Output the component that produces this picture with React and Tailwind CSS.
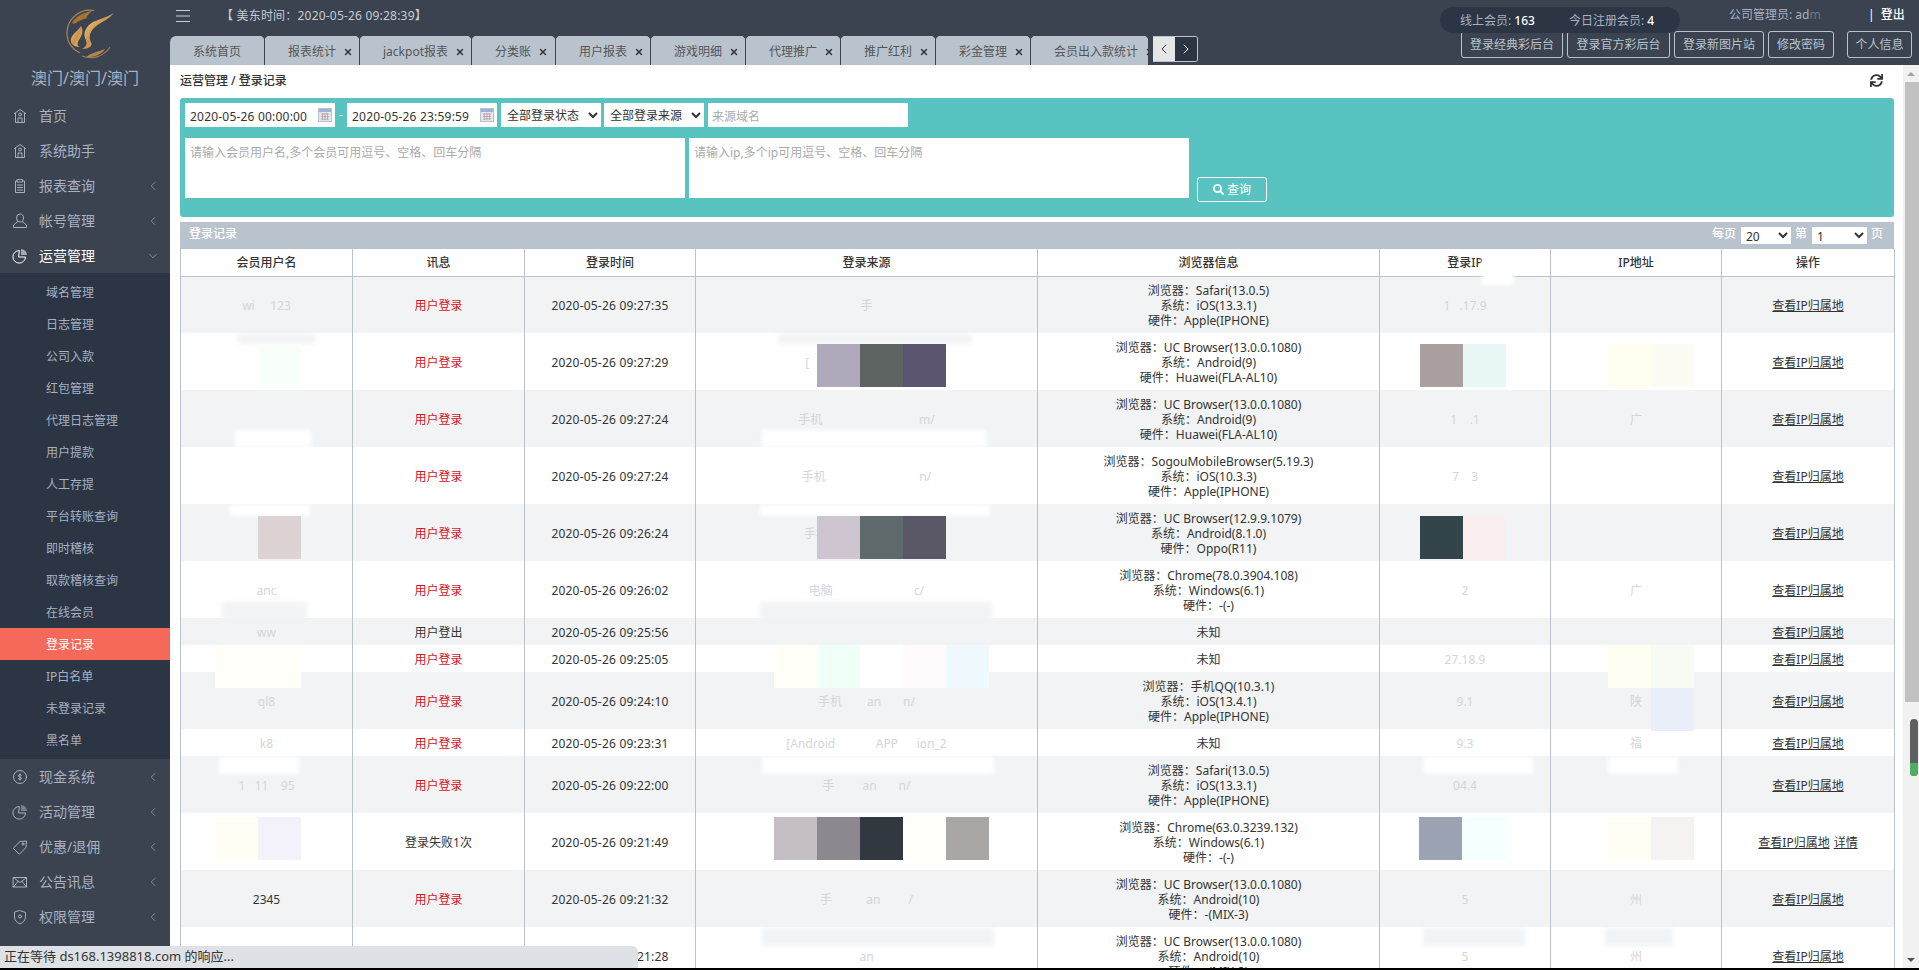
import { FaSearch, FaSync } from 'react-icons/fa'
import { ChevronLeft, ChevronRight, ChevronDown, X } from 'lucide-react'

const line = { fill: 'none', stroke: 'currentColor', strokeWidth: 1, strokeLinejoin: 'round', strokeLinecap: 'round' }

function Icon({ children }) {
  return (
    <svg width="16" height="16" viewBox="0 0 16 16" className="shrink-0" {...line}>
      {children}
    </svg>
  )
}

const HomeIcon = () => (
  <Icon>
    <path d="M2.5 5.5 8 1.5l5.5 4M3.5 5v9.5h9V5" />
    <circle cx="8" cy="6.5" r="1.5" />
    <path d="M6 14.5V10h4v4.5" />
  </Icon>
)
const ReportIcon = () => (
  <Icon>
    <path d="M5.5 3H3.5v11.5h9V3h-2" />
    <path d="M5.5 1.5h5V4h-5zM5.5 7h5M5.5 9.5h5M5.5 12h5" />
  </Icon>
)
const UserIcon = () => (
  <Icon>
    <ellipse cx="8" cy="5" rx="3.5" ry="4" />
    <path d="M5.8 8.5 1.5 12v2.5h13V12l-4.300-3.500" />
  </Icon>
)
const PieIcon = () => (
  <Icon>
    <path d="M7 2.500a6.300 6.300 0 1 0 6.500 6.500H7z" />
    <path d="M9 1a6 6 0 0 1 6 6H9z" fill="currentColor" stroke="none" opacity="0.55" />
  </Icon>
)
const CashIcon = () => (
  <Icon>
    <circle cx="8" cy="8" r="6.500" />
    <path d="M9.500 6.200C9 5.400 6.500 5.300 6.500 6.800S9.500 8 9.500 9.400 7 10.700 6.400 9.800M8 4.800v6.400" />
  </Icon>
)
const TagIcon = () => (
  <Icon>
    <path d="M1.500 9 8 2.500l6.500-.5-.5 6.500L7.500 15z" />
    <circle cx="11" cy="5" r="1" />
  </Icon>
)
const MailIcon = () => (
  <Icon>
    <path d="M1.500 3.500h13v9.500h-13zM1.500 3.500 8 8.500l6.500-5M1.500 13 6 7.300M14.500 13 10 7.300" />
  </Icon>
)
const ShieldIcon = () => (
  <Icon>
    <path d="M8 1.500 13.500 3.500V8c0 3.500-2.500 5.500-5.500 6.800C5 13.500 2.500 11.500 2.500 8V3.500z" />
    <circle cx="8" cy="7.500" r="1.500" />
  </Icon>
)

const subMenu = ['域名管理', '日志管理', '公司入款', '红包管理', '代理日志管理', '用户提款', '人工存提', '平台转账查询', '即时稽核', '取款稽核查询', '在线会员', '登录记录', 'IP白名单', '未登录记录', '黑名单']

function NavItem({ icon, label, arrow = 'left', active }) {
  return (
    <div className={`flex h-[35px] items-center pl-[12px] text-[14px] ${active ? 'text-white' : 'text-[#a7b1c2]'}`}>
      {icon}
      <span className="ml-[11px] flex-1">{label}</span>
      {arrow === 'left' && <ChevronLeft size={14} strokeWidth={1} className="mr-[10px] text-[#b4bcc9]" />}
      {arrow === 'down' && <ChevronDown size={14} strokeWidth={1} className="mr-[10px] text-[#b4bcc9]" />}
    </div>
  )
}

function Logo() {
  return (
    <svg width="52" height="50" viewBox="0 0 52 50" className="ml-[64px]">
      <defs>
        <linearGradient id="gold" x1="0" y1="0" x2="1" y2="1">
          <stop offset="0" stopColor="#f6d896" />
          <stop offset="0.5" stopColor="#c9924a" />
          <stop offset="1" stopColor="#f0c87c" />
        </linearGradient>
      </defs>
      <path d="M30 1.500A23 23 0 0 0 3 24c0 10 6 17 13 20" fill="none" stroke="#a98456" strokeWidth="1.200" />
      <path d="M46 38A23 23 0 0 1 18 47" fill="none" stroke="#9c7a4e" strokeWidth="1.200" />
      <path d="M8 14c3-6 10-10 20-12-3 3-5 4-6 8-3-1-4 2-7 2-2 1-4 4-7 2z" fill="#a87434" />
      <path d="M50 4C43 12 36 13 30 19c-5 5-5 10-3 14 2 4-2 7-9 7 6-3 5-7 3-11-2-5 1-12 8-16 7-3 14-5 21-9z" fill="url(#gold)" />
      <path d="M17 17c3 5 1 9-2 14-2 3-2 6 1 7-6 0-10-3-9-8 1-5 7-8 10-13z" fill="url(#gold)" />
      <path d="M22 48c5-4 11-5 19-8-3 5-11 9-19 8z" fill="#b58649" />
    </svg>
  )
}

function Sidebar() {
  return (
    <aside className="flex w-[170px] shrink-0 flex-col bg-[#3c4350]">
      <div className="h-[98px] pt-[9px] text-center">
        <Logo />
        <div className="mt-[7px] text-[16px] leading-[24px] text-[#a7b1c2]">澳门/澳门/澳门</div>
      </div>
      <NavItem icon={<HomeIcon />} label="首页" arrow="" />
      <NavItem icon={<HomeIcon />} label="系统助手" arrow="" />
      <NavItem icon={<ReportIcon />} label="报表查询" />
      <NavItem icon={<UserIcon />} label="帐号管理" />
      <NavItem icon={<PieIcon />} label="运营管理" arrow="down" active />
      <div className="bg-[#2b3544] py-[3px]">
        {subMenu.map((name) => (
          <div
            key={name}
            className={`flex h-[32px] items-center pt-[2px] pl-[46px] text-[12px] ${name === '登录记录' ? 'bg-[#f4695a] text-white' : 'text-[#a7b1c2]'}`}
          >
            {name}
          </div>
        ))}
      </div>
      <NavItem icon={<CashIcon />} label="现金系统" />
      <NavItem icon={<PieIcon />} label="活动管理" />
      <NavItem icon={<TagIcon />} label="优惠/退佣" />
      <NavItem icon={<MailIcon />} label="公告讯息" />
      <NavItem icon={<ShieldIcon />} label="权限管理" />
    </aside>
  )
}

const tabs = [
  { name: '系统首页', w: 'w-[95px]', fixed: true },
  { name: '报表统计', w: 'w-[95px]' },
  { name: 'jackpot报表', w: 'w-[112px]' },
  { name: '分类账', w: 'w-[84px]' },
  { name: '用户报表', w: 'w-[95px]' },
  { name: '游戏明细', w: 'w-[95px]' },
  { name: '代理推广', w: 'w-[95px]' },
  { name: '推广红利', w: 'w-[95px]' },
  { name: '彩金管理', w: 'w-[95px]' },
  { name: '会员出入款统计', w: 'w-[118px]' },
]

const topButtons = [
  { name: '登录经典彩后台', cls: 'w-[102px]' },
  { name: '登录官方彩后台', cls: 'w-[103px]' },
  { name: '登录新图片站', cls: 'w-[90px]' },
  { name: '修改密码', cls: 'w-[66px]' },
  { name: '个人信息', cls: 'w-[65px] ml-[9px]' },
]

function Header() {
  return (
    <header className="flex h-[65px] shrink-0 justify-between bg-[#3c4350]">
      <div>
        <div className="flex h-[36px] items-center pb-[5px] pl-[5px] text-[12px] text-[#c5ccd5]">
          <svg width="16" height="14" viewBox="0 0 16 14" fill="none" stroke="#c5ccd5">
            <path d="M1 1.500h14M1 7h14M1 12.500h14" />
          </svg>
          <span className="ml-[30px] tracking-[0.2px]">【 美东时间：2020-05-26 09:28:39】</span>
        </div>
        <div className="flex">
          <div className="flex h-[29px] w-[978px] overflow-hidden rounded-tl-[6px] bg-[#b9c3cd] text-[12px] text-[#555]">
            {tabs.map((tab) => (
              <div key={tab.name} className={`relative flex shrink-0 items-center gap-[7px] border-r border-[#3c4350] pt-[2px] pl-[23px] whitespace-nowrap ${tab.w}`}>
                {tab.name}
                {!tab.fixed && <X size={10} strokeWidth={3.500} className="shrink-0 text-[#333]" />}
                <span className="absolute top-[-3px] right-[-3px] h-[5px] w-[5px] rotate-45 bg-[#3c4350]" />
              </div>
            ))}
          </div>
          <div className="ml-[5px] flex h-[26px] w-[45px] overflow-hidden rounded-r-[3px] border-y border-r border-[#b9c3cd]">
            <div className="flex flex-1 items-center justify-center bg-[#e6e6e6] text-[#333]">
              <ChevronLeft size={16} strokeWidth={1.500} />
            </div>
            <div className="flex flex-1 items-center justify-center bg-[#2b3544] text-white">
              <ChevronRight size={16} strokeWidth={1.500} />
            </div>
          </div>
        </div>
      </div>
      <div className="flex flex-col items-end pt-[7px] pr-[7px] text-[12px]">
        <div className="relative z-10 flex h-[26px] items-center">
          <div className="flex h-[26px] w-[240px] items-center rounded-full bg-[#2b3544] pt-[1px] pl-[20px] text-[#a7b1c2]">
            <span className="w-[109px]">线上会员: <b className="font-medium text-white">163</b></span>
            <span>今日注册会员: <b className="font-medium text-white">4</b></span>
          </div>
          <div className="flex w-[232px] -translate-y-[5px] items-center pl-[49px] text-[#a7b1c2]">
            <span className="w-[139px] whitespace-nowrap">公司管理员: ad<span className="text-[#6d7583]">m</span></span>
            <span className="text-white">|</span>
            <span className="ml-[6px] font-medium text-white">登出</span>
          </div>
        </div>
        <div className="-mt-[2px] flex gap-[4px]">
          {topButtons.map((b) => (
            <button key={b.name} className={`h-[27px] rounded-[3px] border border-[#b9c3cd] text-center text-[12px] text-[#b9c3cd] ${b.cls}`}>
              {b.name}
            </button>
          ))}
        </div>
      </div>
    </header>
  )
}

function DateField({ value }) {
  return (
    <div className="relative h-[24px] w-[150px] bg-white">
      <input readOnly value={value} className="h-full w-full px-[5px] pt-[1px] text-[12px] tracking-[0.2px] text-[#333] outline-none" />
      <svg width="14" height="14" viewBox="0 0 14 14" className="absolute top-[5px] right-[3px]">
        <rect x="0.500" y="0.500" width="13" height="13" fill="#dfe6f2" stroke="#b8c4d6" />
        <rect x="1" y="1" width="12" height="3" fill="#9fb3d1" />
        <path d="M3 6h8M3 8.500h8M3 11h8M4.500 5v7M7 5v7M9.500 5v7" stroke="#c09a8c" strokeWidth="0.700" />
      </svg>
    </div>
  )
}

function Filters() {
  const selectCls = 'h-[24px] bg-white px-[2px] text-[12px] text-[#333] outline-none'
  const areaCls = 'h-[60px] w-[500px] resize-none bg-white px-[5px] py-[6px] text-[12px] leading-[17px] text-[#333] outline-none placeholder:text-[#aaa]'
  return (
    <div className="mt-[8px] h-[119px] rounded-[3px] bg-[#58c3c0] px-[5px] pt-[5px]">
      <div className="flex items-center">
        <DateField value="2020-05-26 00:00:00" />
        <span className="w-[12px] text-center text-[12px] text-white">-</span>
        <DateField value="2020-05-26 23:59:59" />
        <select className={`ml-[4px] w-[100px] ${selectCls}`}>
          <option>全部登录状态</option>
        </select>
        <select className={`ml-[3px] w-[100px] ${selectCls}`}>
          <option>全部登录来源</option>
        </select>
        <input placeholder="来源域名" className="ml-[4px] h-[24px] w-[200px] bg-white px-[4px] pt-[2px] text-[12px] outline-none placeholder:text-[#aaa]" />
      </div>
      <div className="mt-[11px] flex">
        <textarea className={areaCls} placeholder="请输入会员用户名,多个会员可用逗号、空格、回车分隔" />
        <textarea className={`ml-[4px] ${areaCls}`} placeholder="请输入ip,多个ip可用逗号、空格、回车分隔" />
        <button className="mt-[39px] ml-[8px] flex h-[25px] w-[70px] items-center justify-center gap-[3px] rounded-[3px] border border-white text-[12px] text-white">
          <FaSearch size={11} />
          查询
        </button>
      </div>
    </div>
  )
}

const L = '用户登录'
const uc13 = 'UC Browser(13.0.0.1080)'
const rows = [
  { user: 'wi     123', time: '09:27:35', src: '手', b: ['Safari(13.0.5)', 'iOS(13.3.1)', 'Apple(IPHONE)'], ip: '1   .17.9', addr: '' },
  { user: '', time: '09:27:29', src: '[                                 /m', b: [uc13, 'Android(9)', 'Huawei(FLA-AL10)'], ip: '          51.', addr: '' },
  { user: '', time: '09:27:24', src: '手机                               m/', b: [uc13, 'Android(9)', 'Huawei(FLA-AL10)'], ip: '1    .1', addr: '广' },
  { user: '  ', time: '09:27:24', src: '手机                              n/', b: ['SogouMobileBrowser(5.19.3)', 'iOS(10.3.3)', 'Apple(IPHONE)'], ip: '7    3', addr: '' },
  { user: '   hi', time: '09:26:24', src: '手机                               /', b: ['UC Browser(12.9.9.1079)', 'Android(8.1.0)', 'Oppo(R11)'], ip: '', addr: '' },
  { user: 'anc', time: '09:26:02', src: '电脑                          c/', b: ['Chrome(78.0.3904.108)', 'Windows(6.1)', '-(-)'], ip: '2', addr: '广' },
  { user: 'ww', msg: '用户登出', time: '09:25:56', src: '', b: ['未知'], ip: '', addr: '' },
  { user: '563', time: '09:25:05', src: '[Androi              APP      ion_29', b: ['未知'], ip: '27.18.9', addr: '福' },
  { user: 'ql8', time: '09:24:10', src: '手机        an       n/', b: ['手机QQ(10.3.1)', 'iOS(13.4.1)', 'Apple(IPHONE)'], ip: '9.1', addr: '陕' },
  { user: 'k8', time: '09:23:31', src: '[Android             APP      ion_2', b: ['未知'], ip: '9.3', addr: '福' },
  { user: '1   11    95', time: '09:22:00', src: '手         an       n/', b: ['Safari(13.0.5)', 'iOS(13.3.1)', 'Apple(IPHONE)'], ip: '04.4', addr: '' },
  { user: 'in', msg: '登录失败1次', time: '09:21:49', src: '[', b: ['Chrome(63.0.3239.132)', 'Windows(6.1)', '-(-)'], ip: '7.2', addr: '州', detail: true },
  { user: '2345', time: '09:21:32', src: '手           an         /', b: [uc13, 'Android(10)', '-(MIX-3)'], ip: '5', addr: '州', dark: true },
  { user: '', time: '09:21:28', src: 'an', b: [uc13, 'Android(10)', '-(MIX-3)'], ip: '5', addr: '州' },
]

// mosaic blocks sitting over the redacted cells, offsets are from the table's top left
const tiles = [
  'left-[78px] top-[95px] bg-[#f8fffa]',
  'left-[637px] top-[95px] bg-[#b0a9bc]',
  'left-[680px] top-[95px] bg-[#5e6462]',
  'left-[723px] top-[95px] bg-[#5c5570]',
  'left-[1240px] top-[95px] bg-[#aaa0a0]',
  'left-[1283px] top-[95px] bg-[#e8f6f6]',
  'left-[1428px] top-[95px] bg-[#fffef0]',
  'left-[1471px] top-[95px] bg-[#fcfcf4]',
  'left-[78px] top-[267px] bg-[#ded3d4]',
  'left-[637px] top-[267px] bg-[#cdc6d0]',
  'left-[680px] top-[267px] bg-[#5f6a6c]',
  'left-[723px] top-[267px] bg-[#5a5766]',
  'left-[1240px] top-[267px] bg-[#34444b]',
  'left-[1283px] top-[267px] bg-[#fbeeee]',
  'left-[35px] top-[568px] bg-[#fffef5]',
  'left-[78px] top-[568px] bg-[#f3f2fb]',
  'left-[594px] top-[568px] bg-[#c5bec5]',
  'left-[637px] top-[568px] bg-[#8d888f]',
  'left-[680px] top-[568px] bg-[#32383f]',
  'left-[723px] top-[568px] bg-[#fffffa]',
  'left-[766px] top-[568px] bg-[#a9a6a4]',
  'left-[1239px] top-[568px] bg-[#9ca3b2]',
  'left-[1282px] top-[568px] bg-[#f4ffff]',
  'left-[1428px] top-[568px] bg-[#fffef5]',
  'left-[1471px] top-[568px] bg-[#f6f2f2]',
  'left-[35px] top-[396px] bg-[#fffef8]',
  'left-[78px] top-[396px] bg-[#fffef8]',
  'left-[594px] top-[396px] bg-[#fffff8]',
  'left-[637px] top-[396px] bg-[#f0fff8]',
  'left-[680px] top-[396px] bg-[#ffffff]',
  'left-[723px] top-[396px] bg-[#fffafc]',
  'left-[766px] top-[396px] bg-[#eefaff]',
  'left-[1428px] top-[396px] bg-[#fffef2]',
  'left-[1471px] top-[396px] bg-[#f8fbf4]',
  'left-[1471px] top-[439px] bg-[#eaeef8]',
]

// soft patches where the blur bled across a row boundary
const patches = [
  'left-[1302px] top-[6px] w-[32px] h-[30px] bg-white',
  'left-[58px] top-[85px] w-[77px] h-[10px] bg-[#f1f3f5]',
  'left-[598px] top-[85px] w-[194px] h-[10px] bg-[#f1f3f5]',
  'left-[55px] top-[181px] w-[76px] h-[18px] bg-white',
  'left-[582px] top-[181px] w-[224px] h-[18px] bg-white',
  'left-[50px] top-[256px] w-[80px] h-[11px] bg-white',
  'left-[580px] top-[256px] w-[230px] h-[11px] bg-white',
  'left-[42px] top-[353px] w-[85px] h-[17px] bg-[#f1f3f5]',
  'left-[580px] top-[353px] w-[232px] h-[17px] bg-[#f1f3f5]',
  'left-[39px] top-[508px] w-[80px] h-[17px] bg-white',
  'left-[582px] top-[508px] w-[232px] h-[17px] bg-white',
  'left-[1243px] top-[508px] w-[110px] h-[17px] bg-white',
  'left-[1428px] top-[508px] w-[70px] h-[17px] bg-white',
  'left-[582px] top-[679px] w-[232px] h-[18px] bg-[#f1f3f5]',
  'left-[1243px] top-[679px] w-[102px] h-[18px] bg-[#f1f3f5]',
  'left-[1425px] top-[679px] w-[68px] h-[18px] bg-[#f1f3f5]',
]

function TableBlock() {
  const th = 'h-[27px] border-x border-b border-[#b9c3cd] pt-[2px] text-center text-[12px] font-medium text-[#333]'
  const td = 'border-x border-[#b9c3cd] p-0 pt-[2px] text-center text-[12px] leading-[15px] text-[#333]'
  const faint = 'border-x border-[#b9c3cd] p-0 pt-[2px] text-center text-[12px] whitespace-pre text-[#d4d6d9]'
  return (
    <div className="mt-[5px]">
      <div className="flex h-[27px] items-center justify-between bg-[#b9c3cd] pr-[11px] pl-[9px] text-[12px] font-medium text-white">
        <span className="-mt-[3px]">登录记录</span>
        <div className="flex items-center">
          <span className="-mt-[3px]">每页</span>
          <select className="ml-[5px] h-[17px] w-[50px] bg-white pl-[1px] text-[12px] font-normal text-[#333] outline-none">
            <option>20</option>
          </select>
          <span className="-mt-[3px] ml-[4px]">第</span>
          <select className="ml-[5px] h-[17px] w-[55px] bg-white pl-[1px] text-[12px] font-normal text-[#333] outline-none">
            <option>1</option>
          </select>
          <span className="-mt-[3px] ml-[4px]">页</span>
        </div>
      </div>
      <div className="relative">
        <table className="w-[1714px] table-fixed border-collapse">
          <colgroup>
            <col className="w-[172px]" />
            <col className="w-[172px]" />
            <col className="w-[171px]" />
            <col className="w-[342px]" />
            <col className="w-[342px]" />
            <col className="w-[171px]" />
            <col className="w-[171px]" />
            <col className="w-[173px]" />
          </colgroup>
          <thead>
            <tr>
              {['会员用户名', '讯息', '登录时间', '登录来源', '浏览器信息', '登录IP', 'IP地址', '操作'].map((h) => (
                <th key={h} className={th}>{h}</th>
              ))}
            </tr>
          </thead>
          <tbody>
            {rows.map((r, i) => (
              <tr key={i} className={`${r.b.length === 1 ? 'h-[27px]' : 'h-[57px]'} ${i % 2 === 0 ? 'bg-[#f1f3f5]' : 'bg-white'}`}>
                <td className={r.dark ? td : faint}>{r.user}</td>
                <td className={`${td} ${r.msg ? '' : 'text-[#d9141e]'}`}>{r.msg || L}</td>
                <td className={`${td} tracking-[0.2px]`}>2020-05-26 {r.time}</td>
                <td className={faint}>{r.src}</td>
                <td className={td}>
                  {r.b.length === 1 ? r.b[0] : (
                    <>
                      <div>浏览器：{r.b[0]}</div>
                      <div>系统：{r.b[1]}</div>
                      <div>硬件：{r.b[2]}</div>
                    </>
                  )}
                </td>
                <td className={faint}>{r.ip}</td>
                <td className={faint}>{r.addr}</td>
                <td className={td}>
                  <a className="underline">查看IP归属地</a>
                  {r.detail && <a className="ml-[4px] underline">详情</a>}
                </td>
              </tr>
            ))}
          </tbody>
        </table>
        {patches.map((p) => (
          <div key={p} className={`absolute blur-[2px] ${p}`} />
        ))}
        {tiles.map((t) => (
          <div key={t} className={`absolute h-[43px] w-[43px] ${t}`} />
        ))}
      </div>
    </div>
  )
}

function Scrollbar() {
  return (
    <div className="flex w-[16px] shrink-0 flex-col bg-[#f1f1f1]">
      <div className="flex h-[17px] items-center justify-center">
        <div className="h-0 w-0 border-x-[4px] border-b-[4px] border-x-transparent border-b-[#a3a3a3]" />
      </div>
      <div className="ml-[2px] h-[620px] bg-[#c1c1c1]" />
      <div className="flex-1" />
      <div className="flex h-[17px] items-center justify-center">
        <div className="h-0 w-0 border-x-[4px] border-t-[4px] border-x-transparent border-t-[#505050]" />
      </div>
    </div>
  )
}

export default function App() {
  return (
    <div className="relative flex h-[970px] flex-col overflow-hidden bg-white font-['Noto_Sans','Noto_Sans_CJK_SC',sans-serif]">
      <div className="flex min-h-0 flex-1">
        <Sidebar />
        <div className="flex min-w-0 flex-1 flex-col">
          <Header />
          <div className="flex min-h-0 flex-1">
            <main className="min-w-0 flex-1 overflow-hidden pr-[9px] pl-[10px]">
              <div className="flex h-[25px] items-end justify-between pr-[11px] text-[12px] font-medium text-[#333]">
                <span>运营管理 / 登录记录</span>
                <FaSync size={13} className="mb-[3px] text-[#333]" />
              </div>
              <Filters />
              <TableBlock />
            </main>
            <Scrollbar />
          </div>
        </div>
      </div>
      <div className="h-[2px] shrink-0 bg-black" />
      {/* browser status bubble and the floating scroll handle */}
      <div className="absolute bottom-[2px] left-0 flex h-[22px] w-[638px] items-center rounded-tr-[6px] bg-[#dee1e6] pl-[4px] text-[13px] text-[#333]">
        正在等待 ds168.1398818.com 的响应...
      </div>
      <div className="absolute top-[719px] right-[1px] flex h-[57px] w-[8px] flex-col justify-end overflow-hidden rounded-full bg-[#5f5f5f]">
        <div className="h-[13px] bg-[#4caf62]" />
      </div>
    </div>
  )
}
